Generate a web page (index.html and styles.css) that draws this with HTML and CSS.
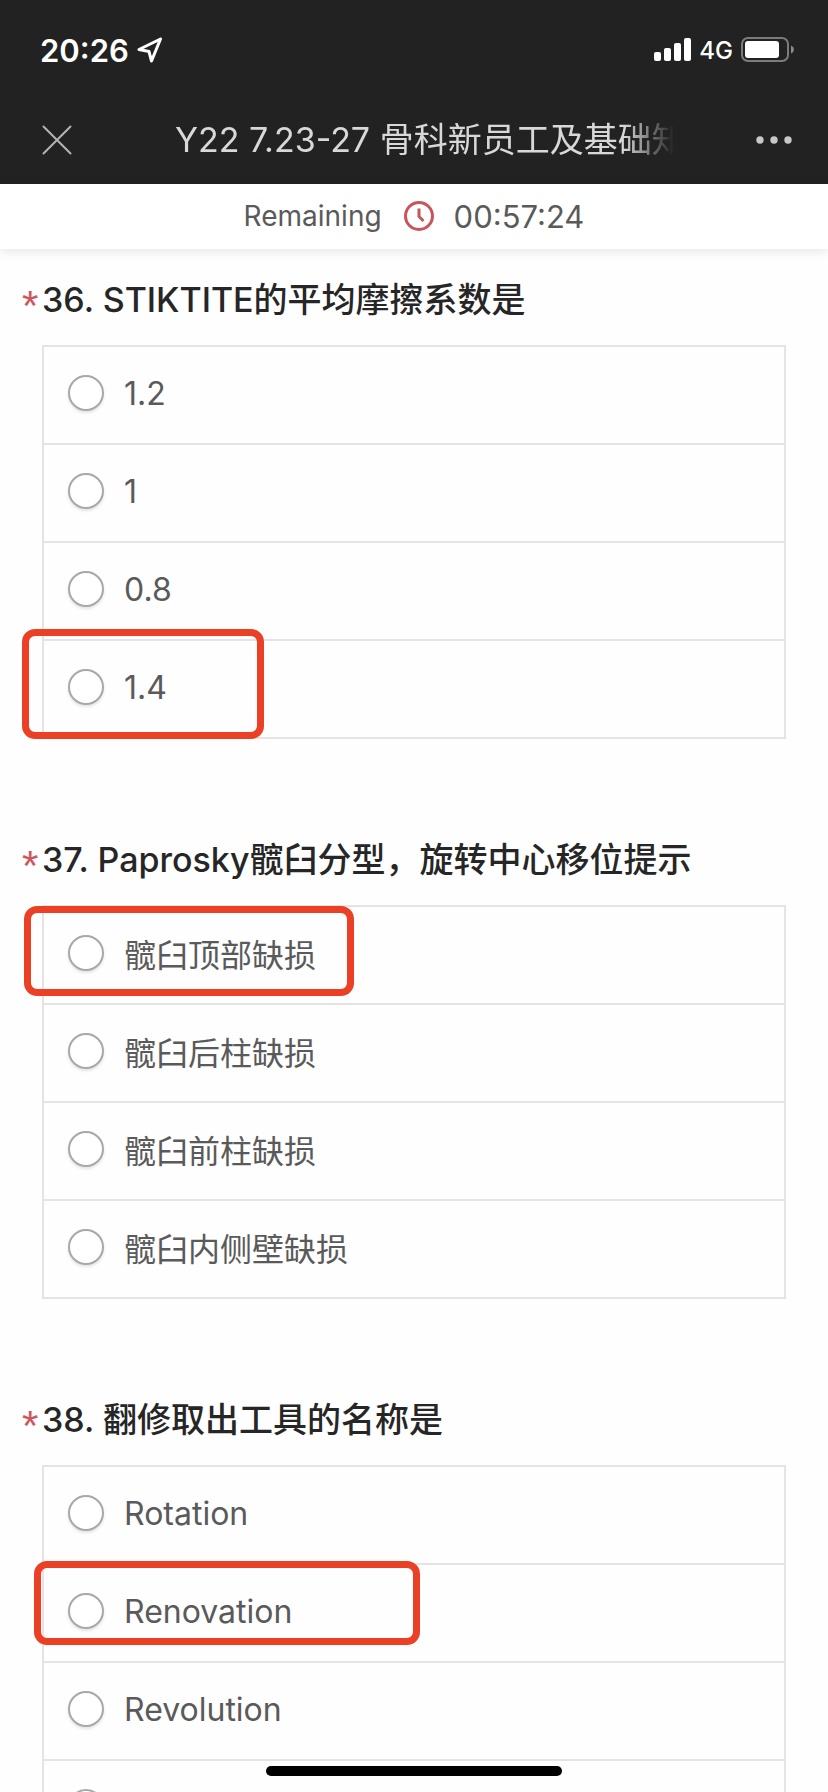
FILE: index.html
```html
<!DOCTYPE html>
<html lang="zh-CN">
<head>
<meta charset="utf-8">
<meta name="viewport" content="width=device-width, initial-scale=1">
<title>Y22 7.23-27 骨科新员工及基础知识</title>
<link rel="stylesheet" href="styles.css">
</head>
<body>
<div class="screen">
  <header class="top">
    <div class="status">
      <div class="status-left">
        <time class="clock">20:26</time>
        <svg class="locate" viewBox="0 0 26 26" aria-hidden="true"><path d="M23.5 2 L2 12.5 L12 14.5 L14.5 24 Z"/></svg>
      </div>
      <div class="status-right">
        <svg class="signal" viewBox="0 0 37 24" aria-hidden="true"><rect x="0" y="14" width="7" height="9" rx="2"/><rect x="10" y="10" width="7" height="13" rx="2"/><rect x="20" y="5" width="7" height="18" rx="2"/><rect x="30" y="0" width="7" height="23" rx="2"/></svg>
        <span class="network">4G</span>
        <svg class="battery" viewBox="0 0 54 26" aria-hidden="true"><rect class="shell" x="1" y="1" width="46" height="23" rx="6"/><rect class="charge" x="4" y="4" width="34" height="17" rx="3"/><path class="cap" d="M50 8.500Q53 10 53 12.500Q53 15 50 16.500Z"/></svg>
      </div>
    </div>
    <nav class="nav">
      <button class="nav-btn" type="button" aria-label="Close"><svg class="close" viewBox="0 0 30 30" aria-hidden="true"><path d="M1.500 1.500L28.500 28.500M28.500 1.500L1.500 28.500"/></svg></button>
      <h1 class="title">Y22 7.23-27 骨科新员工及基础知</h1>
      <button class="nav-btn" type="button" aria-label="More"><svg class="more" viewBox="0 0 36 8" aria-hidden="true"><circle cx="4" cy="4" r="3.700"/><circle cx="18" cy="4" r="3.700"/><circle cx="32" cy="4" r="3.700"/></svg></button>
    </nav>
  </header>
  <div class="timer">
    <span class="timer-label">Remaining</span>
    <svg class="timer-icon" viewBox="0 0 30 30" aria-hidden="true"><circle cx="15" cy="15" r="13.500"/><path d="M15 7.500V15.500L19.500 20"/></svg>
    <time class="timer-value">00:57:24</time>
  </div>
  <main class="questions">
    <fieldset class="question">
      <legend class="heading"><span class="star">*</span>36. STIKTITE的平均摩擦系数是</legend>
      <div class="options">
        <label class="option"><input class="radio" type="radio" name="q36">1.2</label>
        <label class="option"><input class="radio" type="radio" name="q36">1</label>
        <label class="option"><input class="radio" type="radio" name="q36">0.8</label>
        <label class="option"><input class="radio" type="radio" name="q36">1.4<span class="mark mark-short"></span></label>
      </div>
    </fieldset>
    <fieldset class="question">
      <legend class="heading"><span class="star">*</span>37. Paprosky髋臼分型，旋转中心移位提示</legend>
      <div class="options">
        <label class="option"><input class="radio" type="radio" name="q37">髋臼顶部缺损<span class="mark mark-medium"></span></label>
        <label class="option"><input class="radio" type="radio" name="q37">髋臼后柱缺损</label>
        <label class="option"><input class="radio" type="radio" name="q37">髋臼前柱缺损</label>
        <label class="option"><input class="radio" type="radio" name="q37">髋臼内侧壁缺损</label>
      </div>
    </fieldset>
    <fieldset class="question">
      <legend class="heading"><span class="star">*</span>38. 翻修取出工具的名称是</legend>
      <div class="options">
        <label class="option"><input class="radio" type="radio" name="q38">Rotation</label>
        <label class="option"><input class="radio" type="radio" name="q38">Renovation<span class="mark mark-long"></span></label>
        <label class="option"><input class="radio" type="radio" name="q38">Revolution</label>
        <label class="option"><input class="radio" type="radio" name="q38" aria-label="Option 4"></label>
      </div>
    </fieldset>
  </main>
  <div class="home-bar"></div>
</div>
</body>
</html>
```

FILE: styles.css
```css
* { box-sizing: border-box; }

body {
  margin: 0;
  background: #fefefe;
  color: #5a5a5a;
  font-family: Inter, "Noto Sans CJK SC", sans-serif;
  font-size: 32px;
}

.screen {
  position: relative;
  display: flex;
  flex-direction: column;
  height: 100vh;
  overflow: hidden;
}

.top {
  flex: none;
  background: #222;
  color: #fff;
}

.status {
  display: flex;
  justify-content: space-between;
  align-items: center;
  height: 100px;
  padding: 0 33px 0 40px;
}

.status-left,
.status-right {
  display: flex;
  align-items: center;
  gap: 8px;
}

.clock {
  font-size: 31px;
  font-weight: 600;
}

.locate {
  width: 26px;
  height: 26px;
  fill: none;
  stroke: #fff;
  stroke-width: 3;
  stroke-linejoin: round;
}

.signal {
  width: 37px;
  height: 24px;
  fill: #fff;
}

.network {
  font-size: 24px;
  font-weight: 500;
}

.battery {
  width: 54px;
  height: 26px;
}

.shell {
  fill: none;
  stroke: #7c7c7c;
  stroke-width: 2;
}

.charge { fill: #fff; }
.cap { fill: #8c8c8c; }

.nav {
  display: flex;
  align-items: center;
  height: 84px;
  padding: 0 36px 4px 42px;
}

.nav-btn {
  display: flex;
  flex: none;
  align-items: center;
  padding: 0;
  border: 0;
  background: none;
}

.close {
  width: 30px;
  height: 30px;
  fill: none;
  stroke: #b4b4b4;
  stroke-width: 2;
  stroke-linecap: round;
}

.more {
  width: 36px;
  height: 8px;
  fill: #c8c8c8;
}

.title {
  flex: 1;
  margin: 0 72px 0 103px;
  overflow: hidden;
  color: #d8d8d8;
  font-size: 34px;
  font-weight: 400;
  line-height: 44px;
  white-space: nowrap;
  -webkit-mask-image: linear-gradient(to right, #000 calc(100% - 60px), transparent calc(100% - 10px));
  mask-image: linear-gradient(to right, #000 calc(100% - 60px), transparent calc(100% - 10px));
}

.timer {
  display: flex;
  flex: none;
  justify-content: center;
  align-items: center;
  height: 65px;
  padding-bottom: 1px;
  background: #fff;
  box-shadow: 0 2px 10px #0000001a;
}

.timer-label {
  font-size: 28px;
}

.timer-icon {
  width: 30px;
  height: 30px;
  margin: 0 20px 0 22px;
  fill: none;
  stroke: #c9555c;
  stroke-width: 3;
}

.timer-value { font-size: 31px; }

.questions {
  flex: 1;
  min-height: 0;
  padding: 29px 42px 0;
  overflow: hidden;
}

.question {
  min-width: 0;
  margin: 0 0 99px;
  padding: 0;
  border: 0;
}

.heading {
  display: flex;
  align-items: center;
  height: 44px;
  margin: 0 0 23px -20px;
  padding: 0;
  color: #262626;
  font-size: 34px;
  font-weight: 500;
  line-height: 44px;
}

.star {
  width: 20px;
  padding-top: 12px;
  color: #d0555c;
  font-family: "Liberation Sans", Arial, sans-serif;
  font-size: 42px;
}

.options {
  border: 2px solid #e4e4e4;
}

.option {
  position: relative;
  display: flex;
  align-items: center;
  gap: 20px;
  height: 98px;
  padding: 0 24px 4px;
  border-bottom: 2px solid #e4e4e4;
}

.option:last-child {
  height: 96px;
  border-bottom: 0;
}

.radio {
  width: 36px;
  height: 36px;
  margin: 0;
  appearance: none;
  border: 2px solid #a8a8a8;
  border-radius: 50%;
  background: #fff;
  box-shadow: 0 2px 3px #0000001a;
}

.radio:checked { background: radial-gradient(#c9555c 40%, #fff 45%); }

.mark {
  position: absolute;
  border: 7px solid #eb4026;
  border-radius: 13px;
  pointer-events: none;
}

.mark-short {
  top: -12px;
  left: -22px;
  width: 242px;
  height: 110px;
}

.mark-medium {
  top: -1px;
  left: -20px;
  width: 330px;
  height: 90px;
}

.mark-long {
  top: -4px;
  left: -10px;
  width: 386px;
  height: 84px;
}

.home-bar {
  position: absolute;
  bottom: 16px;
  left: 50%;
  width: 296px;
  height: 10px;
  margin-left: -148px;
  border-radius: 5px;
  background: #000;
}
```
